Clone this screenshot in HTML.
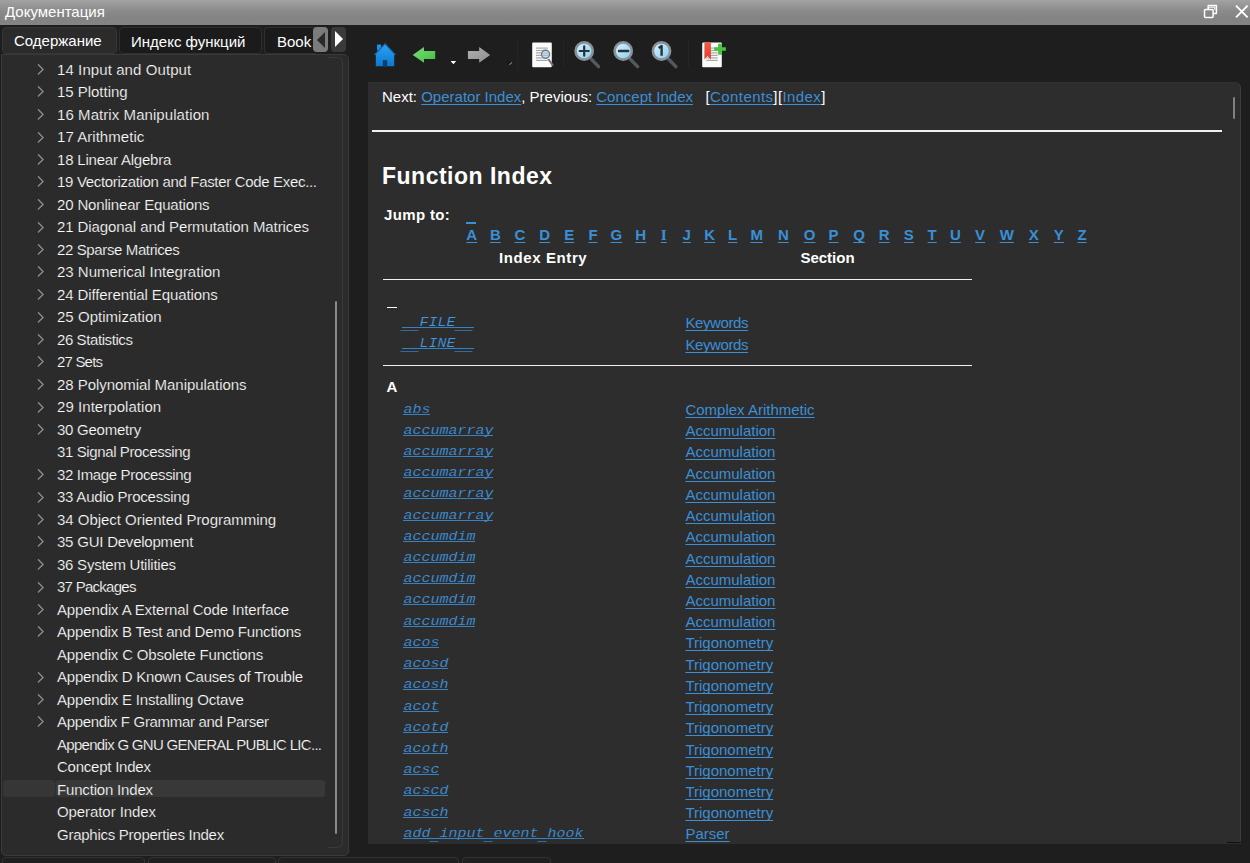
<!DOCTYPE html>
<html><head><meta charset="utf-8">
<style>
*{margin:0;padding:0;box-sizing:border-box}
html,body{width:1250px;height:863px;overflow:hidden;background:#1e1e1e;font-family:"Liberation Sans",sans-serif;color:#fff}
.abs{position:absolute}
#title{left:0;top:0;width:1250px;height:25.4px;background:linear-gradient(#a2a2a2 0,#8a8a8a 45%,#838383 75%,#848484 100%)}
#title .t{left:5px;top:3px;font-size:15px;color:#fff;white-space:nowrap}
.tab{position:absolute;top:27px;height:26.5px;border:1px solid #2f2f2f;border-radius:4px;background:#1b1b1b;font-size:15px;color:#fff;white-space:nowrap;padding-top:4px}
#lpanel{left:1px;top:54px;width:348px;height:802px;background:#2b2b2b;border:1px solid #3a3a3a;border-radius:0 5px 5px 5px}
#linner{left:1px;top:1px;width:340px;height:792px;border-right:1px solid #383838;border-bottom:1px solid #383838;border-radius:0 0 6px 0}
.li{position:absolute;left:57px;font-size:15px;color:#fff;-webkit-text-stroke:0.2px #2b2b2b;white-space:nowrap;line-height:18px}
.chev{position:absolute;left:36.5px;width:8px;height:11px}
#sel{left:56px;top:780px;width:269px;height:17px;background:#383838;border-radius:3px}
#rpanel{left:368px;top:82px;width:873px;height:762px;background:#2d2d2d;border-right:1px solid #3c3c3c;border-top:1px solid #313131;border-radius:0 6px 0 0}
.c{position:absolute;white-space:nowrap;font-size:15px;line-height:18px}
.a{color:#3b8fd6;text-decoration:underline;text-underline-offset:2px;text-decoration-skip-ink:none}
.m{font-family:"Liberation Mono",monospace;font-style:italic;font-size:15px;transform:scaleY(0.86);transform-origin:0 13px}
.b{font-weight:bold}
.hr{position:absolute;height:2px;background:#f0f0f0}
.btab{position:absolute;top:857px;height:10px;border:1px solid #333;border-radius:4px 4px 0 0;background:#1f1f1f}
.mu{color:#409ae6;-webkit-text-stroke:0.22px #2d2d2d;background:linear-gradient(#3a90d9,#3a90d9) 0 12.6px/100% 1px no-repeat}
.us{position:relative;top:3.2px;-webkit-text-stroke:0}

</style></head><body>
<div id="title" class="abs"><div class="t abs">Документация</div><svg class="abs" style="left:1200px;top:0px" width="50" height="25" viewBox="1200 0 50 25"><path d="M1208.2 9 V5.6 H1216.4 V13.4 H1213" fill="none" stroke="#fff" stroke-width="1.5" stroke-linejoin="round"/><path d="M1208.2 7.2 H1214.8 V10" fill="none" stroke="#fff" stroke-width="1"/><rect x="1204.5" y="9.6" width="8.6" height="8" rx="1" fill="none" stroke="#fff" stroke-width="1.5"/><path d="M1236 5.6 L1247.6 17.4 M1247.6 5.6 L1236 17.4" stroke="#fff" stroke-width="1.9"/></svg></div>
<div class="tab" style="left:2px;width:115px;background:#2b2b2b;border-color:#363636;padding-left:11px">Содержание</div>
<div class="tab" style="left:119px;width:143px;padding-left:11px;padding-top:5px">Индекс функций</div>
<div class="tab" style="left:264px;width:52px;padding-left:12px;padding-top:5px;overflow:hidden;border-right:none;border-radius:4px 0 0 4px">Book</div>
<div class="abs" style="left:313px;top:27px;width:15px;height:25px;background:#7b7b7b;border-radius:4px"></div>
<svg class="abs" style="left:317px;top:31.5px" width="9" height="16"><path d="M8 0V16L0 8Z" fill="#2a2a2a"/></svg>
<div class="abs" style="left:331px;top:27px;width:15px;height:25px;background:#3a3a3a;border-radius:4px"></div>
<svg class="abs" style="left:334px;top:31px" width="9" height="16"><path d="M1 0V16L9 8Z" fill="#fff"/></svg>
<div id="lpanel" class="abs"></div>
<div class="abs" style="left:328px;top:56.5px;width:15px;height:791px;border:1px solid #3a3a3a;border-left:none;border-radius:0 6px 6px 0"></div>
<div id="sel" class="abs"></div><div class="abs" style="left:3px;top:780px;width:52px;height:17px;background:#363636;border-radius:3px"></div><div class="abs" style="left:55px;top:780px;width:1px;height:17px;background:#2e2e2e"></div>
<div class="abs" style="left:335px;top:301px;width:2px;height:533px;background:#8a8a8a;border-radius:1px"></div>
<div class="li" style="top:61px;letter-spacing:0.089px">14 Input and Output</div>
<svg class="chev" style="top:64px" viewBox="0 0 8 11"><path d="M1.4 0.8L6.1 5.4L1.4 10" fill="none" stroke="#8c8c8c" stroke-width="1.35" stroke-linecap="round" stroke-linejoin="round"/></svg>
<div class="li" style="top:83px;letter-spacing:-0.028px">15 Plotting</div>
<svg class="chev" style="top:86px" viewBox="0 0 8 11"><path d="M1.4 0.8L6.1 5.4L1.4 10" fill="none" stroke="#8c8c8c" stroke-width="1.35" stroke-linecap="round" stroke-linejoin="round"/></svg>
<div class="li" style="top:106px;letter-spacing:0.071px">16 Matrix Manipulation</div>
<svg class="chev" style="top:109px" viewBox="0 0 8 11"><path d="M1.4 0.8L6.1 5.4L1.4 10" fill="none" stroke="#8c8c8c" stroke-width="1.35" stroke-linecap="round" stroke-linejoin="round"/></svg>
<div class="li" style="top:128px;letter-spacing:0.050px">17 Arithmetic</div>
<svg class="chev" style="top:132px" viewBox="0 0 8 11"><path d="M1.4 0.8L6.1 5.4L1.4 10" fill="none" stroke="#8c8c8c" stroke-width="1.35" stroke-linecap="round" stroke-linejoin="round"/></svg>
<div class="li" style="top:151px;letter-spacing:-0.199px">18 Linear Algebra</div>
<svg class="chev" style="top:154px" viewBox="0 0 8 11"><path d="M1.4 0.8L6.1 5.4L1.4 10" fill="none" stroke="#8c8c8c" stroke-width="1.35" stroke-linecap="round" stroke-linejoin="round"/></svg>
<div class="li" style="top:173px;letter-spacing:-0.324px">19 Vectorization and Faster Code Exec...</div>
<svg class="chev" style="top:176px" viewBox="0 0 8 11"><path d="M1.4 0.8L6.1 5.4L1.4 10" fill="none" stroke="#8c8c8c" stroke-width="1.35" stroke-linecap="round" stroke-linejoin="round"/></svg>
<div class="li" style="top:196px;letter-spacing:-0.159px">20 Nonlinear Equations</div>
<svg class="chev" style="top:199px" viewBox="0 0 8 11"><path d="M1.4 0.8L6.1 5.4L1.4 10" fill="none" stroke="#8c8c8c" stroke-width="1.35" stroke-linecap="round" stroke-linejoin="round"/></svg>
<div class="li" style="top:218px;letter-spacing:-0.090px">21 Diagonal and Permutation Matrices</div>
<svg class="chev" style="top:222px" viewBox="0 0 8 11"><path d="M1.4 0.8L6.1 5.4L1.4 10" fill="none" stroke="#8c8c8c" stroke-width="1.35" stroke-linecap="round" stroke-linejoin="round"/></svg>
<div class="li" style="top:241px;letter-spacing:-0.378px">22 Sparse Matrices</div>
<svg class="chev" style="top:244px" viewBox="0 0 8 11"><path d="M1.4 0.8L6.1 5.4L1.4 10" fill="none" stroke="#8c8c8c" stroke-width="1.35" stroke-linecap="round" stroke-linejoin="round"/></svg>
<div class="li" style="top:263px;letter-spacing:-0.001px">23 Numerical Integration</div>
<svg class="chev" style="top:266px" viewBox="0 0 8 11"><path d="M1.4 0.8L6.1 5.4L1.4 10" fill="none" stroke="#8c8c8c" stroke-width="1.35" stroke-linecap="round" stroke-linejoin="round"/></svg>
<div class="li" style="top:286px;letter-spacing:-0.103px">24 Differential Equations</div>
<svg class="chev" style="top:289px" viewBox="0 0 8 11"><path d="M1.4 0.8L6.1 5.4L1.4 10" fill="none" stroke="#8c8c8c" stroke-width="1.35" stroke-linecap="round" stroke-linejoin="round"/></svg>
<div class="li" style="top:308px;letter-spacing:0.027px">25 Optimization</div>
<svg class="chev" style="top:312px" viewBox="0 0 8 11"><path d="M1.4 0.8L6.1 5.4L1.4 10" fill="none" stroke="#8c8c8c" stroke-width="1.35" stroke-linecap="round" stroke-linejoin="round"/></svg>
<div class="li" style="top:331px;letter-spacing:-0.414px">26 Statistics</div>
<svg class="chev" style="top:334px" viewBox="0 0 8 11"><path d="M1.4 0.8L6.1 5.4L1.4 10" fill="none" stroke="#8c8c8c" stroke-width="1.35" stroke-linecap="round" stroke-linejoin="round"/></svg>
<div class="li" style="top:353px;letter-spacing:-0.811px">27 Sets</div>
<svg class="chev" style="top:356px" viewBox="0 0 8 11"><path d="M1.4 0.8L6.1 5.4L1.4 10" fill="none" stroke="#8c8c8c" stroke-width="1.35" stroke-linecap="round" stroke-linejoin="round"/></svg>
<div class="li" style="top:376px;letter-spacing:-0.055px">28 Polynomial Manipulations</div>
<svg class="chev" style="top:379px" viewBox="0 0 8 11"><path d="M1.4 0.8L6.1 5.4L1.4 10" fill="none" stroke="#8c8c8c" stroke-width="1.35" stroke-linecap="round" stroke-linejoin="round"/></svg>
<div class="li" style="top:398px;letter-spacing:0.053px">29 Interpolation</div>
<svg class="chev" style="top:402px" viewBox="0 0 8 11"><path d="M1.4 0.8L6.1 5.4L1.4 10" fill="none" stroke="#8c8c8c" stroke-width="1.35" stroke-linecap="round" stroke-linejoin="round"/></svg>
<div class="li" style="top:421px;letter-spacing:-0.250px">30 Geometry</div>
<svg class="chev" style="top:424px" viewBox="0 0 8 11"><path d="M1.4 0.8L6.1 5.4L1.4 10" fill="none" stroke="#8c8c8c" stroke-width="1.35" stroke-linecap="round" stroke-linejoin="round"/></svg>
<div class="li" style="top:443px;letter-spacing:-0.385px">31 Signal Processing</div>
<div class="li" style="top:466px;letter-spacing:-0.345px">32 Image Processing</div>
<svg class="chev" style="top:469px" viewBox="0 0 8 11"><path d="M1.4 0.8L6.1 5.4L1.4 10" fill="none" stroke="#8c8c8c" stroke-width="1.35" stroke-linecap="round" stroke-linejoin="round"/></svg>
<div class="li" style="top:488px;letter-spacing:-0.220px">33 Audio Processing</div>
<svg class="chev" style="top:492px" viewBox="0 0 8 11"><path d="M1.4 0.8L6.1 5.4L1.4 10" fill="none" stroke="#8c8c8c" stroke-width="1.35" stroke-linecap="round" stroke-linejoin="round"/></svg>
<div class="li" style="top:511px;letter-spacing:-0.034px">34 Object Oriented Programming</div>
<svg class="chev" style="top:514px" viewBox="0 0 8 11"><path d="M1.4 0.8L6.1 5.4L1.4 10" fill="none" stroke="#8c8c8c" stroke-width="1.35" stroke-linecap="round" stroke-linejoin="round"/></svg>
<div class="li" style="top:533px;letter-spacing:-0.222px">35 GUI Development</div>
<svg class="chev" style="top:536px" viewBox="0 0 8 11"><path d="M1.4 0.8L6.1 5.4L1.4 10" fill="none" stroke="#8c8c8c" stroke-width="1.35" stroke-linecap="round" stroke-linejoin="round"/></svg>
<div class="li" style="top:556px;letter-spacing:-0.243px">36 System Utilities</div>
<svg class="chev" style="top:559px" viewBox="0 0 8 11"><path d="M1.4 0.8L6.1 5.4L1.4 10" fill="none" stroke="#8c8c8c" stroke-width="1.35" stroke-linecap="round" stroke-linejoin="round"/></svg>
<div class="li" style="top:578px;letter-spacing:-0.732px">37 Packages</div>
<svg class="chev" style="top:582px" viewBox="0 0 8 11"><path d="M1.4 0.8L6.1 5.4L1.4 10" fill="none" stroke="#8c8c8c" stroke-width="1.35" stroke-linecap="round" stroke-linejoin="round"/></svg>
<div class="li" style="top:601px;letter-spacing:-0.140px">Appendix A External Code Interface</div>
<svg class="chev" style="top:604px" viewBox="0 0 8 11"><path d="M1.4 0.8L6.1 5.4L1.4 10" fill="none" stroke="#8c8c8c" stroke-width="1.35" stroke-linecap="round" stroke-linejoin="round"/></svg>
<div class="li" style="top:623px;letter-spacing:-0.194px">Appendix B Test and Demo Functions</div>
<svg class="chev" style="top:626px" viewBox="0 0 8 11"><path d="M1.4 0.8L6.1 5.4L1.4 10" fill="none" stroke="#8c8c8c" stroke-width="1.35" stroke-linecap="round" stroke-linejoin="round"/></svg>
<div class="li" style="top:646px;letter-spacing:-0.170px">Appendix C Obsolete Functions</div>
<div class="li" style="top:668px;letter-spacing:-0.221px">Appendix D Known Causes of Trouble</div>
<svg class="chev" style="top:672px" viewBox="0 0 8 11"><path d="M1.4 0.8L6.1 5.4L1.4 10" fill="none" stroke="#8c8c8c" stroke-width="1.35" stroke-linecap="round" stroke-linejoin="round"/></svg>
<div class="li" style="top:691px;letter-spacing:-0.184px">Appendix E Installing Octave</div>
<svg class="chev" style="top:694px" viewBox="0 0 8 11"><path d="M1.4 0.8L6.1 5.4L1.4 10" fill="none" stroke="#8c8c8c" stroke-width="1.35" stroke-linecap="round" stroke-linejoin="round"/></svg>
<div class="li" style="top:713px;letter-spacing:-0.319px">Appendix F Grammar and Parser</div>
<svg class="chev" style="top:716px" viewBox="0 0 8 11"><path d="M1.4 0.8L6.1 5.4L1.4 10" fill="none" stroke="#8c8c8c" stroke-width="1.35" stroke-linecap="round" stroke-linejoin="round"/></svg>
<div class="li" style="top:736px;letter-spacing:-0.701px">Appendix G GNU GENERAL PUBLIC LIC...</div>
<div class="li" style="top:758px;letter-spacing:-0.236px">Concept Index</div>
<div class="li" style="top:781px;letter-spacing:-0.176px">Function Index</div>
<div class="li" style="top:803px;letter-spacing:-0.081px">Operator Index</div>
<div class="li" style="top:826px;letter-spacing:-0.259px">Graphics Properties Index</div>
<div class="btab" style="left:2px;width:143px"></div>
<div class="btab" style="left:148px;width:128px"></div>
<div class="btab" style="left:278px;width:181px"></div>
<div class="btab" style="left:462px;width:89px"></div>
<svg class="abs" style="left:360px;top:30px" width="380" height="50" viewBox="360 30 380 50">
<defs>
<linearGradient id="hg" x1="0" y1="0" x2="0" y2="1"><stop offset="0" stop-color="#2ea3ef"/><stop offset="1" stop-color="#0b78d2"/></linearGradient>
<linearGradient id="gg" x1="0" y1="0" x2="1" y2="1"><stop offset="0" stop-color="#7fdc7f"/><stop offset="1" stop-color="#3cbf3c"/></linearGradient>
<linearGradient id="fg" x1="0" y1="0" x2="1" y2="1"><stop offset="0" stop-color="#b0b0b0"/><stop offset="1" stop-color="#8e8e8e"/></linearGradient>
<linearGradient id="lg" x1="0" y1="0" x2="1" y2="1"><stop offset="0" stop-color="#d8f6ff"/><stop offset="1" stop-color="#86cdef"/></linearGradient>
<linearGradient id="rg" x1="0" y1="0" x2="0" y2="1"><stop offset="0" stop-color="#f25a48"/><stop offset="1" stop-color="#e23a2a"/></linearGradient>
</defs>
<!-- home -->
<rect x="377" y="44.5" width="4" height="6" fill="#1d8fe0"/>
<path d="M374.3 55 L385 43.6 L395.7 55 L394.2 55 L394.2 66.3 L375.8 66.3 L375.8 55 Z" fill="url(#hg)"/>
<path d="M374.6 54.8 L385 43.8 L395.4 54.8" fill="none" stroke="#0f64a8" stroke-width="1.1"/>
<rect x="382.8" y="60.2" width="4.4" height="6.1" fill="#0c3c6a"/>
<!-- back -->
<path d="M412.7 55 L424 47.1 L424 51 L435.2 51 L435.2 58.9 L424 58.9 L424 62.7 Z" fill="url(#gg)"/>
<path d="M450.6 61 L456.2 61 L453.4 64.2 Z" fill="#fff"/>
<!-- forward -->
<path d="M490.2 55 L479.2 47.1 L479.2 51 L467.9 51 L467.9 58.9 L479.2 58.9 L479.2 62.7 Z" fill="url(#fg)"/>
<path d="M506.2 61.2 L512.2 62 L509.3 64.6 Z" fill="#141414"/><path d="M512 62.4 L509.3 64.6" fill="none" stroke="#8a8a8a" stroke-width="1.1"/>
<line x1="517.5" y1="39" x2="517.5" y2="69" stroke="#242424" stroke-width="1"/>
<!-- doc find -->
<rect x="532.2" y="42.4" width="19.6" height="24.8" rx="1" fill="#fafafa"/>
<g stroke="#a8a8a8" stroke-width="1.2">
<line x1="536" y1="48.1" x2="547.7" y2="48.1"/><line x1="536" y1="50.5" x2="547.7" y2="50.5"/>
<line x1="536" y1="52.9" x2="547.7" y2="52.9"/><line x1="536" y1="55.4" x2="547.7" y2="55.4"/>
<line x1="536" y1="57.9" x2="547.7" y2="57.9"/><line x1="536" y1="60.4" x2="547.7" y2="60.4"/>
</g>
<line x1="548.3" y1="59" x2="553" y2="65.6" stroke="#6c7880" stroke-width="2"/>
<circle cx="545.6" cy="54.3" r="4" fill="#c4e4f6" stroke="#6c7880" stroke-width="1.4"/>
<line x1="542.5" y1="53.2" x2="548.7" y2="53.2" stroke="#9ab" stroke-width="0.8"/>
<line x1="542.5" y1="55.4" x2="548.7" y2="55.4" stroke="#9ab" stroke-width="0.8"/>
<line x1="563.5" y1="39" x2="563.5" y2="69" stroke="#242424" stroke-width="1"/>
<!-- zoom in / out / 1 -->
<g id="mag">
<line x1="591.4" y1="59.3" x2="598.6" y2="66.6" stroke="#4f5a62" stroke-width="3.4" stroke-linecap="round"/>
<circle cx="584.2" cy="51" r="8.6" fill="url(#lg)" stroke="#8a9198" stroke-width="2.6"/>
</g>
<path d="M579.6 51 H588.8 M584.2 46.3 V55.7" stroke="#2a3038" stroke-width="2.2" stroke-linecap="round"/>
<use href="#mag" transform="translate(39 0)"/>
<path d="M619 51 H628.2" stroke="#2a3038" stroke-width="2.4" stroke-linecap="round"/>
<use href="#mag" transform="translate(77.3 0)"/>
<path d="M658.6 48 L661.6 46 V55.8" fill="none" stroke="#2a3038" stroke-width="2.4" stroke-linejoin="round"/>
<line x1="688.5" y1="39" x2="688.5" y2="69" stroke="#242424" stroke-width="1"/>
<!-- bookmark add -->
<rect x="702.2" y="42.4" width="19.6" height="24.8" rx="1" fill="#fafafa"/>
<g stroke="#a8a8a8" stroke-width="1.2">
<line x1="706.3" y1="48.1" x2="717.7" y2="48.1"/><line x1="706.3" y1="50.5" x2="717.7" y2="50.5"/>
<line x1="706.3" y1="52.9" x2="717.7" y2="52.9"/><line x1="706.3" y1="55.4" x2="717.7" y2="55.4"/>
<line x1="706.3" y1="57.9" x2="717.7" y2="57.9"/><line x1="706.3" y1="60.4" x2="717.7" y2="60.4"/>
</g>
<path d="M704.4 42.4 H710.9 V59.6 L707.6 56 L704.4 59.6 Z" fill="url(#rg)"/>
<path d="M718.1 43.7 H721.9 V47.3 H725.9 V50.8 H721.9 V54.8 H718.1 V50.8 H714.2 V47.3 H718.1 Z" fill="#47c43f"/>
</svg>

<div id="rpanel" class="abs"></div>
<div class="abs" style="left:1227px;top:838px;width:14px;height:5px;border-right:1px solid #3c3c3c;border-bottom:1px solid #3c3c3c;border-radius:0 0 3px 0;background:#2d2d2d"></div>
<div class="abs" style="left:1227px;top:842px;width:14px;height:1.2px;background:#101010"></div>
<div class="abs" style="left:1233px;top:97px;width:2.4px;height:22px;background:#808080;border-radius:2px"></div>
<div class="c " style="left:382px;top:87.80px;">Next: <span class="a">Operator Index</span>, Previous: <span class="a">Concept Index</span>&nbsp;&nbsp;&nbsp;<span style="letter-spacing:0.4px">[<span class="a">Contents</span>][<span class="a">Index</span>]</span></div>
<div class="hr" style="left:372px;top:130px;width:850px;height:2px"></div>
<div class="c b" style="left:382px;top:162.4px;font-size:23px;line-height:28px;letter-spacing:0.5px">Function Index</div>
<div class="c b" style="left:384px;top:206.40px;letter-spacing:0.35px">Jump to:</div>
<div class="abs" style="left:466.2px;top:222.2px;width:9.8px;height:1.6px;background:#3a90d9"></div>
<div class="c b" style="left:466.3px;top:225.80px;"><span class="a">A</span></div>
<div class="c b" style="left:490px;top:225.80px;"><span class="a">B</span></div>
<div class="c b" style="left:514.4px;top:225.80px;"><span class="a">C</span></div>
<div class="c b" style="left:539.2px;top:225.80px;"><span class="a">D</span></div>
<div class="c b" style="left:564.3px;top:225.80px;"><span class="a">E</span></div>
<div class="c b" style="left:588.4px;top:225.80px;"><span class="a">F</span></div>
<div class="c b" style="left:610.4px;top:225.80px;"><span class="a">G</span></div>
<div class="c b" style="left:635.2px;top:225.80px;"><span class="a">H</span></div>
<div class="c b" style="left:660.8px;top:225.80px;"><span class="a" style="font-family:'Liberation Serif';font-size:15.5px">I</span></div>
<div class="c b" style="left:682.6px;top:225.80px;"><span class="a">J</span></div>
<div class="c b" style="left:704.3px;top:225.80px;"><span class="a">K</span></div>
<div class="c b" style="left:728.1px;top:225.80px;"><span class="a">L</span></div>
<div class="c b" style="left:750.4px;top:225.80px;"><span class="a">M</span></div>
<div class="c b" style="left:777.9px;top:225.80px;"><span class="a">N</span></div>
<div class="c b" style="left:803.8px;top:225.80px;"><span class="a">O</span></div>
<div class="c b" style="left:828.6px;top:225.80px;"><span class="a">P</span></div>
<div class="c b" style="left:853.2px;top:225.80px;"><span class="a">Q</span></div>
<div class="c b" style="left:878.8px;top:225.80px;"><span class="a">R</span></div>
<div class="c b" style="left:903.8px;top:225.80px;"><span class="a">S</span></div>
<div class="c b" style="left:927.6px;top:225.80px;"><span class="a">T</span></div>
<div class="c b" style="left:950px;top:225.80px;"><span class="a">U</span></div>
<div class="c b" style="left:975.1px;top:225.80px;"><span class="a">V</span></div>
<div class="c b" style="left:999.7px;top:225.80px;"><span class="a">W</span></div>
<div class="c b" style="left:1028.7px;top:225.80px;"><span class="a">X</span></div>
<div class="c b" style="left:1053.8px;top:225.80px;"><span class="a">Y</span></div>
<div class="c b" style="left:1077.5px;top:225.80px;"><span class="a">Z</span></div>
<div class="c b" style="left:499px;top:249.20px;letter-spacing:0.6px">Index Entry</div>
<div class="c b" style="left:800.4px;top:249.20px;">Section</div>
<div class="hr" style="left:383px;top:279px;width:589px;height:1.4px"></div>
<div class="abs" style="left:387px;top:306.6px;width:10.4px;height:1.6px;background:#fff"></div>
<div class="c m" style="left:401.5px;top:313.60px;"><span class="mu"><span class="us">__</span>FILE<span class="us">__</span></span></div>
<div class="c " style="left:685.4px;top:314.30px;letter-spacing:-0.4px"><span class="a">Keywords</span></div>
<div class="c m" style="left:401.5px;top:334.60px;"><span class="mu"><span class="us">__</span>LINE<span class="us">__</span></span></div>
<div class="c " style="left:685.4px;top:335.70px;letter-spacing:-0.4px"><span class="a">Keywords</span></div>
<div class="hr" style="left:383px;top:365px;width:589px;height:1.4px"></div>
<div class="c b" style="left:386.6px;top:377.80px;">A</div>
<div class="c m" style="left:403.4px;top:400.50px;"><span class="mu">abs</span></div>
<div class="c " style="left:685.4px;top:401.00px;"><span class="a">Complex Arithmetic</span></div>
<div class="c m" style="left:403.4px;top:421.72px;"><span class="mu">accumarray</span></div>
<div class="c " style="left:685.4px;top:422.22px;"><span class="a">Accumulation</span></div>
<div class="c m" style="left:403.4px;top:442.94px;"><span class="mu">accumarray</span></div>
<div class="c " style="left:685.4px;top:443.44px;"><span class="a">Accumulation</span></div>
<div class="c m" style="left:403.4px;top:464.16px;"><span class="mu">accumarray</span></div>
<div class="c " style="left:685.4px;top:464.66px;"><span class="a">Accumulation</span></div>
<div class="c m" style="left:403.4px;top:485.38px;"><span class="mu">accumarray</span></div>
<div class="c " style="left:685.4px;top:485.88px;"><span class="a">Accumulation</span></div>
<div class="c m" style="left:403.4px;top:506.60px;"><span class="mu">accumarray</span></div>
<div class="c " style="left:685.4px;top:507.10px;"><span class="a">Accumulation</span></div>
<div class="c m" style="left:403.4px;top:527.82px;"><span class="mu">accumdim</span></div>
<div class="c " style="left:685.4px;top:528.32px;"><span class="a">Accumulation</span></div>
<div class="c m" style="left:403.4px;top:549.04px;"><span class="mu">accumdim</span></div>
<div class="c " style="left:685.4px;top:549.54px;"><span class="a">Accumulation</span></div>
<div class="c m" style="left:403.4px;top:570.26px;"><span class="mu">accumdim</span></div>
<div class="c " style="left:685.4px;top:570.76px;"><span class="a">Accumulation</span></div>
<div class="c m" style="left:403.4px;top:591.48px;"><span class="mu">accumdim</span></div>
<div class="c " style="left:685.4px;top:591.98px;"><span class="a">Accumulation</span></div>
<div class="c m" style="left:403.4px;top:612.70px;"><span class="mu">accumdim</span></div>
<div class="c " style="left:685.4px;top:613.20px;"><span class="a">Accumulation</span></div>
<div class="c m" style="left:403.4px;top:633.92px;"><span class="mu">acos</span></div>
<div class="c " style="left:685.4px;top:634.42px;"><span class="a">Trigonometry</span></div>
<div class="c m" style="left:403.4px;top:655.14px;"><span class="mu">acosd</span></div>
<div class="c " style="left:685.4px;top:655.64px;"><span class="a">Trigonometry</span></div>
<div class="c m" style="left:403.4px;top:676.36px;"><span class="mu">acosh</span></div>
<div class="c " style="left:685.4px;top:676.86px;"><span class="a">Trigonometry</span></div>
<div class="c m" style="left:403.4px;top:697.58px;"><span class="mu">acot</span></div>
<div class="c " style="left:685.4px;top:698.08px;"><span class="a">Trigonometry</span></div>
<div class="c m" style="left:403.4px;top:718.80px;"><span class="mu">acotd</span></div>
<div class="c " style="left:685.4px;top:719.30px;"><span class="a">Trigonometry</span></div>
<div class="c m" style="left:403.4px;top:740.02px;"><span class="mu">acoth</span></div>
<div class="c " style="left:685.4px;top:740.52px;"><span class="a">Trigonometry</span></div>
<div class="c m" style="left:403.4px;top:761.24px;"><span class="mu">acsc</span></div>
<div class="c " style="left:685.4px;top:761.74px;"><span class="a">Trigonometry</span></div>
<div class="c m" style="left:403.4px;top:782.46px;"><span class="mu">acscd</span></div>
<div class="c " style="left:685.4px;top:782.96px;"><span class="a">Trigonometry</span></div>
<div class="c m" style="left:403.4px;top:803.68px;"><span class="mu">acsch</span></div>
<div class="c " style="left:685.4px;top:804.18px;"><span class="a">Trigonometry</span></div>
<div class="c m" style="left:403.4px;top:824.90px;"><span class="mu">add<span class="us">_</span>input<span class="us">_</span>event<span class="us">_</span>hook</span></div>
<div class="c " style="left:685.4px;top:825.40px;"><span class="a">Parser</span></div>
</body></html>
